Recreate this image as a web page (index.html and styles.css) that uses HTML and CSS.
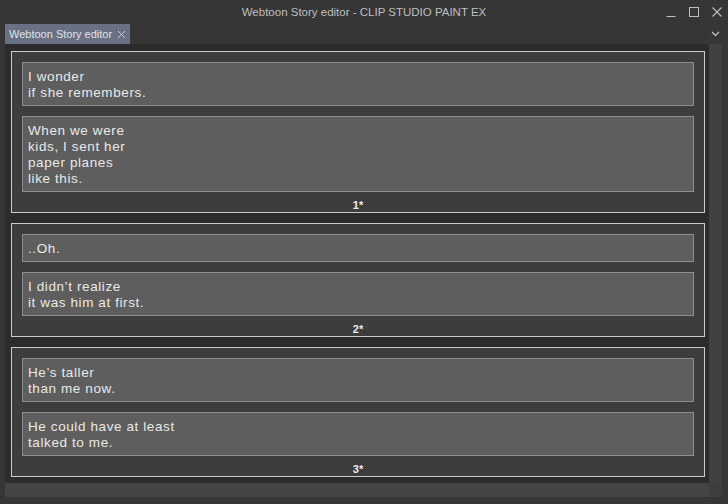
FILE: index.html
```html
<!DOCTYPE html>
<html lang="en">
<head>
<meta charset="utf-8">
<title>Webtoon Story editor</title>
<link rel="stylesheet" href="styles.css">
</head>
<body>
<div class="window">
  <header class="titlebar">
    <div class="title">Webtoon Story editor - CLIP STUDIO PAINT EX</div>
    <div class="controls">
      <svg class="ctl" width="12" height="12" viewBox="0 0 12 12"><path d="M1.5 10.5h9" stroke="#bdbdbd" stroke-width="1" fill="none"/></svg>
      <svg class="ctl" width="12" height="12" viewBox="0 0 12 12"><rect x="1.5" y="1.5" width="9" height="9" stroke="#bdbdbd" stroke-width="1" fill="none"/></svg>
      <svg class="ctl" width="12" height="12" viewBox="0 0 12 12"><path d="M1.5 1.5l9 9M10.5 1.5l-9 9" stroke="#bdbdbd" stroke-width="1.1" fill="none"/></svg>
    </div>
  </header>
  <nav class="tabbar">
    <div class="tab"><span class="tabtext">Webtoon Story editor</span>
      <svg class="tabclose" width="9" height="9" viewBox="0 0 9 9"><path d="M1 1l7 7M8 1l-7 7" stroke="#c9ccd4" stroke-width="1" fill="none"/></svg>
    </div>
    <svg class="chev" width="9" height="6" viewBox="0 0 9 6"><path d="M1 1l3.5 3.5L8 1" stroke="#bdbdbd" stroke-width="1.3" fill="none"/></svg>
  </nav>
  <main class="view">
    <div class="viewrow">
      <div class="scroll">
        <section class="page">
          <div class="box">I wonder<br>if she remembers.</div>
          <div class="box">When we were<br>kids, I sent her<br>paper planes<br>like this.</div>
          <div class="label">1*</div>
        </section>
        <section class="page">
          <div class="box">..Oh.</div>
          <div class="box">I didn’t realize<br>it was him at first.</div>
          <div class="label">2*</div>
        </section>
        <section class="page">
          <div class="box">He’s taller<br>than me now.</div>
          <div class="box">He could have at least<br>talked to me.</div>
          <div class="label">3*</div>
        </section>
      </div>
      <div class="vscroll"></div>
    </div>
    <div class="hrow">
      <div class="hscroll"></div>
      <div class="corner"></div>
    </div>
  </main>
</div>
</body>
</html>
```
FILE: styles.css
```css
* { box-sizing: border-box; }
html, body { margin: 0; padding: 0; }
body {
  width: 728px;
  height: 504px;
  overflow: hidden;
  background: #363636;
  font-family: "Liberation Sans", "Noto Sans", sans-serif;
}
.window {
  display: flex;
  flex-direction: column;
  height: 504px;
}
.titlebar {
  height: 24px;
  display: grid;
  grid-template-columns: 1fr auto 1fr;
  align-items: center;
}
.title {
  grid-column: 2;
  color: #bfbfbf;
  font-size: 11.5px;
  white-space: nowrap;
}
.controls {
  grid-column: 3;
  justify-self: end;
  display: flex;
  gap: 11px;
  padding-right: 5px;
}
.tabbar {
  height: 21px;
  display: flex;
  align-items: flex-start;
  padding-left: 5px;
  padding-right: 8px;
}
.tab {
  height: 20px;
  width: 125px;
  background: #6a7184;
  color: #dfe1e6;
  font-size: 11px;
  display: flex;
  align-items: center;
  padding-left: 4px;
  gap: 5px;
  margin-top: 1px;
  white-space: nowrap;
}
.tabclose { flex-shrink: 0; margin-top: 1px; }
.chev { margin-left: auto; margin-top: 8px; }
.view {
  flex: 1;
  display: flex;
  flex-direction: column;
  margin: 0 6px 7px 5px;
  background: #2c2c2c;
}
.viewrow {
  flex: 1;
  display: flex;
  min-height: 0;
}
.scroll {
  flex: 1;
  padding: 7px 4px 6px 6px;
  display: flex;
  flex-direction: column;
  gap: 10px;
}
.vscroll {
  width: 13px;
  background: #414141;
}
.hrow {
  height: 14px;
  display: flex;
}
.hscroll { flex: 1; background: #444444; }
.corner { width: 13px; background: #3e3e3e; }
.page {
  border: 1px solid #cdcdcd;
  background: #3d3d3d;
  padding: 10px 10px 0 10px;
  display: flex;
  flex-direction: column;
  gap: 10px;
}
.box {
  background: #5e5e5e;
  border: 1px solid #8d8d8d;
  padding: 6px 5px 4px 5px;
  color: #e9e9e9;
  font-family: "Liberation Sans", "Noto Sans", sans-serif;
  font-size: 13.5px;
  letter-spacing: 0.6px;
  line-height: 16px;
}
.label {
  height: 20px;
  margin-top: -10px;
  display: flex;
  align-items: center;
  justify-content: center;
  color: #ececec;
  font-family: "Liberation Sans", sans-serif;
  font-weight: bold;
  font-size: 11px;
  padding-top: 5px;
}
```
